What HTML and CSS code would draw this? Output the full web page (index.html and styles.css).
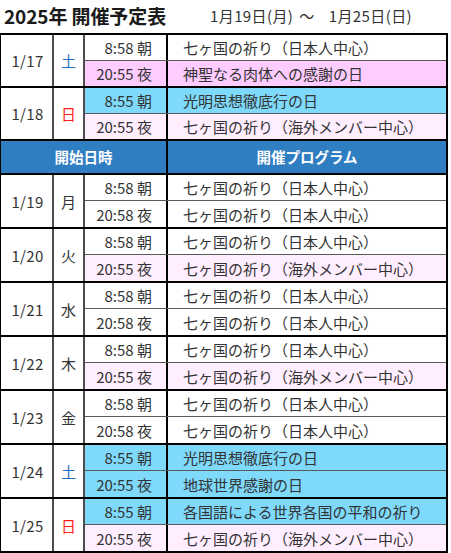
FILE: index.html
```html
<!DOCTYPE html>
<html lang="ja">
<head>
<meta charset="utf-8">
<title>2025年 開催予定表</title>
<link rel="stylesheet" href="styles.css">
</head>
<body>
<div class="top">
  <h1 class="title">2025年 開催予定表</h1>
  <div class="range"><span>1月19日(月)</span><span class="tilde">～</span><span>1月25日(日)</span></div>
</div>
<div class="schedule">
  <div class="group early">
    <div class="date">1/17</div>
    <div class="day sat">土</div>
    <div class="slots">
      <div class="slot"><div class="time">8:58 朝</div><div class="prog">七ヶ国の祈り（日本人中心）</div></div>
      <div class="slot pink"><div class="time">20:55 夜</div><div class="prog">神聖なる肉体への感謝の日</div></div>
    </div>
  </div>
  <div class="group early">
    <div class="date">1/18</div>
    <div class="day sun">日</div>
    <div class="slots">
      <div class="slot cyan"><div class="time">8:55 朝</div><div class="prog">光明思想徹底行の日</div></div>
      <div class="slot blush"><div class="time">20:55 夜</div><div class="prog">七ヶ国の祈り（海外メンバー中心）</div></div>
    </div>
  </div>
  <div class="head">
    <div class="head-when">開始日時</div>
    <div class="head-prog">開催プログラム</div>
  </div>
  <div class="group">
    <div class="date">1/19</div>
    <div class="day">月</div>
    <div class="slots">
      <div class="slot"><div class="time">8:58 朝</div><div class="prog">七ヶ国の祈り（日本人中心）</div></div>
      <div class="slot"><div class="time">20:58 夜</div><div class="prog">七ヶ国の祈り（日本人中心）</div></div>
    </div>
  </div>
  <div class="group">
    <div class="date">1/20</div>
    <div class="day">火</div>
    <div class="slots">
      <div class="slot"><div class="time">8:58 朝</div><div class="prog">七ヶ国の祈り（日本人中心）</div></div>
      <div class="slot blush"><div class="time">20:55 夜</div><div class="prog">七ヶ国の祈り（海外メンバー中心）</div></div>
    </div>
  </div>
  <div class="group">
    <div class="date">1/21</div>
    <div class="day">水</div>
    <div class="slots">
      <div class="slot"><div class="time">8:58 朝</div><div class="prog">七ヶ国の祈り（日本人中心）</div></div>
      <div class="slot"><div class="time">20:58 夜</div><div class="prog">七ヶ国の祈り（日本人中心）</div></div>
    </div>
  </div>
  <div class="group">
    <div class="date">1/22</div>
    <div class="day">木</div>
    <div class="slots">
      <div class="slot"><div class="time">8:58 朝</div><div class="prog">七ヶ国の祈り（日本人中心）</div></div>
      <div class="slot blush"><div class="time">20:55 夜</div><div class="prog">七ヶ国の祈り（海外メンバー中心）</div></div>
    </div>
  </div>
  <div class="group">
    <div class="date">1/23</div>
    <div class="day">金</div>
    <div class="slots">
      <div class="slot"><div class="time">8:58 朝</div><div class="prog">七ヶ国の祈り（日本人中心）</div></div>
      <div class="slot"><div class="time">20:58 夜</div><div class="prog">七ヶ国の祈り（日本人中心）</div></div>
    </div>
  </div>
  <div class="group">
    <div class="date">1/24</div>
    <div class="day sat">土</div>
    <div class="slots">
      <div class="slot cyan"><div class="time">8:55 朝</div><div class="prog">光明思想徹底行の日</div></div>
      <div class="slot cyan"><div class="time">20:55 夜</div><div class="prog">地球世界感謝の日</div></div>
    </div>
  </div>
  <div class="group">
    <div class="date">1/25</div>
    <div class="day sun">日</div>
    <div class="slots">
      <div class="slot cyan"><div class="time">8:55 朝</div><div class="prog">各国語による世界各国の平和の祈り</div></div>
      <div class="slot blush"><div class="time">20:55 夜</div><div class="prog">七ヶ国の祈り（海外メンバー中心）</div></div>
    </div>
  </div>
</div>
</body>
</html>
```

FILE: styles.css
```css
* { box-sizing: border-box; }

html, body {
  margin: 0;
  padding: 0;
  background: #ffffff;
}

body {
  font-family: "Noto Sans CJK JP", "Noto Sans", sans-serif;
  color: #333333;
  width: 451px;
  overflow: hidden;
}

.top {
  display: flex;
  align-items: center;
  height: 33px;
  padding-bottom: 2px;
}

.title {
  margin: 0;
  width: 210px;
  padding-left: 4px;
  font-size: 19px;
  font-weight: 700;
  color: #1a1a1a;
  line-height: 1;
  letter-spacing: -0.1px;
}

.range {
  display: flex;
  align-items: center;
  font-size: 15px;
  line-height: 1;
  color: #333333;
  letter-spacing: 0.4px;
}

.tilde {
  margin: 0 14px 0 6px;
}

.schedule {
  margin-left: -1px;
  width: 449px;
  border: 2px solid #000000;
  font-size: 15px;
  line-height: 1;
}

.group {
  display: grid;
  grid-template-columns: 53px 31px 1fr;
  border-bottom: 2px solid #000000;
}

.group:last-child {
  border-bottom: none;
}

.date,
.day {
  display: flex;
  align-items: center;
  justify-content: center;
  background: #ffffff;
  border-right: 2px solid #4d4d4d;
}

.date {
  padding-left: 2px;
  letter-spacing: 0.3px;
}

.day.sat { color: #1f6fc0; }
.day.sun { color: #ff1a1a; }

.slots {
  display: flex;
  flex-direction: column;
}

.slot {
  display: grid;
  grid-template-columns: 83px 1fr;
  height: 25px;
  background: #ffffff;
}

.slot + .slot {
  height: 27px;
  border-top: 1px solid #5a5a5a;
}

.group.early .slot + .slot {
  height: 26px;
}

.slot.pink { background: #ffccff; }
.slot.blush { background: #ffeeff; }
.slot.cyan { background: #7ed9fb; }

.time {
  display: flex;
  align-items: center;
  justify-content: flex-end;
  padding-right: 14px;
  border-right: 2px solid #000000;
  white-space: nowrap;
}

.prog {
  display: flex;
  align-items: center;
  padding-left: 15px;
  white-space: nowrap;
}

.head {
  display: grid;
  grid-template-columns: 167px 1fr;
  height: 34px;
  background: #2f7ec2;
  color: #ffffff;
  font-weight: 700;
  font-size: 14.5px;
  border-bottom: 2px solid #000000;
}

.head-when,
.head-prog {
  display: flex;
  align-items: center;
  justify-content: center;
}

.head-when {
  border-right: 2px solid #000000;
}
```
